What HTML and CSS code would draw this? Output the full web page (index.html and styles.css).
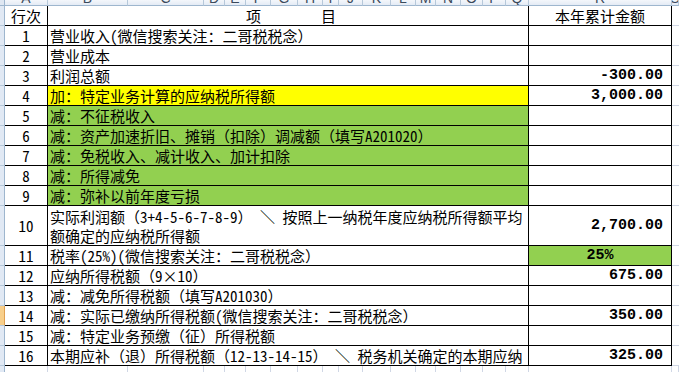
FILE: index.html
```html
<!DOCTYPE html>
<html lang="zh">
<head>
<meta charset="utf-8">
<link rel="stylesheet" href="styles.css">
</head>
<body>
<div class="sheet">
  <div class="colhead">
    <div class="corner"></div>
    <div class="ch"><span>A</span></div>
    <div class="ch"><span>B</span></div>
    <div class="ch"><span>C</span></div>
    <div class="ch"><span>D</span></div>
    <div class="ch"><span>E</span></div>
    <div class="ch"><span>F</span></div>
    <div class="ch"><span>G</span></div>
    <div class="ch"><span>H</span></div>
    <div class="ch"><span>I</span></div>
    <div class="ch"><span>J</span></div>
    <div class="ch"><span>K</span></div>
    <div class="ch"><span>L</span></div>
    <div class="ch"><span>M</span></div>
    <div class="ch"><span>N</span></div>
    <div class="ch"><span>O</span></div>
    <div class="ch"><span>P</span></div>
    <div class="ch"><span>Q</span></div>
    <div class="ch"><span>R</span></div>
    <div class="ch"><span>S</span></div>
  </div>

  <div class="row">
    <div class="g"></div>
    <div class="a">行次</div>
    <div class="c head"><span>项</span><span>目</span></div>
    <div class="r center">本年累计金额</div>
    <div class="x"></div>
  </div>
  <div class="row">
    <div class="g"></div>
    <div class="a">1</div>
    <div class="c">营业收入(微信搜索关注：二哥税税念）</div>
    <div class="r"></div>
    <div class="x"></div>
  </div>
  <div class="row">
    <div class="g"></div>
    <div class="a">2</div>
    <div class="c">营业成本</div>
    <div class="r"></div>
    <div class="x"></div>
  </div>
  <div class="row">
    <div class="g"></div>
    <div class="a">3</div>
    <div class="c">利润总额</div>
    <div class="r num">-300.00</div>
    <div class="x"></div>
  </div>
  <div class="row">
    <div class="g"></div>
    <div class="a">4</div>
    <div class="c yellow">加：特定业务计算的应纳税所得额</div>
    <div class="r num">3,000.00</div>
    <div class="x"></div>
  </div>
  <div class="row">
    <div class="g"></div>
    <div class="a">5</div>
    <div class="c green">减：不征税收入</div>
    <div class="r"></div>
    <div class="x"></div>
  </div>
  <div class="row">
    <div class="g"></div>
    <div class="a">6</div>
    <div class="c green">减：资产加速折旧、摊销（扣除）调减额（填写A201020）</div>
    <div class="r"></div>
    <div class="x"></div>
  </div>
  <div class="row">
    <div class="g"></div>
    <div class="a">7</div>
    <div class="c green">减：免税收入、减计收入、加计扣除</div>
    <div class="r"></div>
    <div class="x"></div>
  </div>
  <div class="row">
    <div class="g"></div>
    <div class="a">8</div>
    <div class="c green">减：所得减免</div>
    <div class="r"></div>
    <div class="x"></div>
  </div>
  <div class="row">
    <div class="g"></div>
    <div class="a">9</div>
    <div class="c green">减：弥补以前年度亏损</div>
    <div class="r"></div>
    <div class="x"></div>
  </div>
  <div class="row tall">
    <div class="g"></div>
    <div class="a">10</div>
    <div class="c two"><span>实际利润额（3+4-5-6-7-8-9） ＼ 按照上一纳税年度应纳税所得额平均</span><span>额确定的应纳税所得额</span></div>
    <div class="r num">2,700.00</div>
    <div class="x"></div>
  </div>
  <div class="row">
    <div class="g"></div>
    <div class="a">11</div>
    <div class="c">税率(25%)(微信搜索关注：二哥税税念）</div>
    <div class="r num center green">25%</div>
    <div class="x"></div>
  </div>
  <div class="row">
    <div class="g"></div>
    <div class="a">12</div>
    <div class="c">应纳所得税额（9×10）</div>
    <div class="r num">675.00</div>
    <div class="x"></div>
  </div>
  <div class="row">
    <div class="g"></div>
    <div class="a">13</div>
    <div class="c">减：减免所得税额（填写A201030）</div>
    <div class="r"></div>
    <div class="x"></div>
  </div>
  <div class="row">
    <div class="g sel"></div>
    <div class="a">14</div>
    <div class="c">减：实际已缴纳所得税额(微信搜索关注：二哥税税念）</div>
    <div class="r num">350.00</div>
    <div class="x"></div>
  </div>
  <div class="row">
    <div class="g"></div>
    <div class="a">15</div>
    <div class="c">减：特定业务预缴（征）所得税额</div>
    <div class="r"></div>
    <div class="x"></div>
  </div>
  <div class="row">
    <div class="g"></div>
    <div class="a">16</div>
    <div class="c">本期应补（退）所得税额（12-13-14-15） ＼ 税务机关确定的本期应纳</div>
    <div class="r num">325.00</div>
    <div class="x"></div>
  </div>
  <div class="blank">
    <div class="g"></div>
    <div class="b"></div><div class="b"></div><div class="b"></div><div class="b"></div>
    <div class="b"></div><div class="b"></div><div class="b"></div><div class="b"></div>
    <div class="b"></div><div class="b"></div><div class="b"></div><div class="b"></div>
    <div class="b"></div><div class="b"></div><div class="b"></div><div class="b"></div>
    <div class="b"></div><div class="b"></div><div class="b"></div>
  </div>
</div>
</body>
</html>
```
FILE: styles.css
```css
* { box-sizing: border-box; }
html, body { margin: 0; padding: 0; background: #ffffff; }
body {
  width: 679px;
  height: 372px;
  overflow: hidden;
  font-family: "Noto Sans Mono CJK SC", "Noto Sans CJK SC", sans-serif;
  font-size: 15px;
  color: #000;
}
.sheet { display: flex; flex-direction: column; }

.colhead, .blank {
  display: grid;
  grid-template-columns: 5px 43px 80px 76px 21px 21px 25px 27px 25px 16px 24px 28px 25px 20px 25px 22px 23px 23px 143px 1fr;
}
.colhead { height: 6px; overflow: hidden; }
.corner {
  background: #dfe7f2;
  border-right: 1px solid #9eb6ce;
  border-bottom: 1px solid #9eb6ce;
}
.ch {
  background: linear-gradient(#f4f7fb, #e4ebf5);
  border-right: 1px solid #b6c8da;
  border-bottom: 1px solid #9eb6ce;
  display: flex;
  justify-content: center;
  overflow: hidden;
  font-family: "Liberation Sans", sans-serif;
  font-size: 14px;
  color: #3b4a5c;
}
.ch span { display: block; line-height: 14px; margin-top: -9px; }

.row {
  display: grid;
  grid-template-columns: 5px 43px 481px 143px 1fr;
  height: 20px;
}
.row.tall { height: 40px; }
.g {
  background: #e1e9f4;
  border-right: 1px solid #9eb6ce;
  border-bottom: 1px solid #b6c8da;
}
.g.sel { background: #f8cf8a; border-right-color: #e0a050; }
.a, .c, .r {
  border-right: 1px solid #000;
  border-bottom: 1px solid #000;
  display: flex;
  align-items: center;
  line-height: 19px;
  white-space: nowrap;
  overflow: hidden;
}
.a { justify-content: center; }
.c { padding-left: 2px; }
.c.head { justify-content: center; gap: 60px; padding-left: 6px; }
.c.two { flex-direction: column; align-items: flex-start; justify-content: center; }
.c.two span { display: block; line-height: 19px; }
.r { justify-content: flex-end; padding-right: 8px; }
.r.center { justify-content: center; padding-right: 0; }
.num {
  font-family: "Liberation Mono", monospace;
  font-weight: bold;
  font-size: 15px;
}
.yellow { background: #ffff00; }
.green { background: #92d050; }
.x { border-bottom: 1px solid #d0d7e5; }

.blank { height: 20px; }
.b { border-right: 1px solid #d0d7e5; border-bottom: 1px solid #d0d7e5; }
```
